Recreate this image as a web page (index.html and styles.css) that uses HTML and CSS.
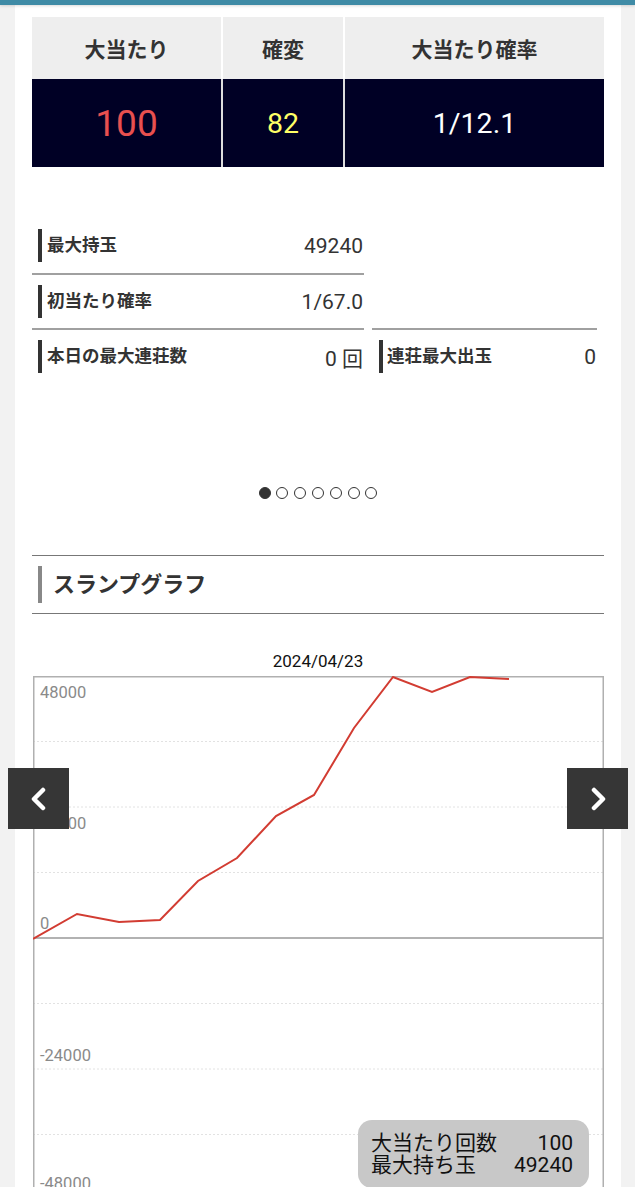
FILE: index.html
```html
<!DOCTYPE html>
<html>
<head>
    <meta charset="utf-8">
    <title>台データ</title>
    <link rel="stylesheet" href="styles.css">
</head>
<body>
    <div class="topbar"></div>
    <div class="panel">
        <p class="top-note">データ更新 2024/04/23</p>

        <table class="summary">
            <colgroup>
                <col class="col-a">
                <col class="col-b">
                <col class="col-c">
            </colgroup>
            <tr>
                <th>大当たり</th>
                <th>確変</th>
                <th>大当たり確率</th>
            </tr>
            <tr>
                <td class="num-red">100</td>
                <td class="num-yellow">82</td>
                <td class="num-white">1/12.1</td>
            </tr>
        </table>

        <div class="stats">
            <div class="stat left">
                <span class="stat-label">最大持玉</span>
                <span class="stat-value">49240</span>
            </div>
            <div class="stat left line">
                <span class="stat-label">初当たり確率</span>
                <span class="stat-value">1/67.0</span>
            </div>
            <div class="stat left line">
                <span class="stat-label">本日の最大連荘数</span>
                <span class="stat-value">0 回</span>
            </div>
            <div class="stat line right">
                <span class="stat-label">連荘最大出玉</span>
                <span class="stat-value">0</span>
            </div>
        </div>

        <div class="dots">
            <span class="dot active"></span>
            <span class="dot"></span>
            <span class="dot"></span>
            <span class="dot"></span>
            <span class="dot"></span>
            <span class="dot"></span>
            <span class="dot"></span>
        </div>

        <h3 class="section-title"><span>スランプグラフ</span></h3>

        <div class="chart-date">2024/04/23</div>
        <div class="chart">
            <svg width="571" height="540" viewBox="0 0 571 540">
                <g stroke="#e2e2e2" stroke-width="1" stroke-dasharray="2 2">
                    <line x1="0" y1="65.5" x2="571" y2="65.5"/>
                    <line x1="0" y1="131" x2="571" y2="131"/>
                    <line x1="0" y1="196.5" x2="571" y2="196.5"/>
                    <line x1="0" y1="327.5" x2="571" y2="327.5"/>
                    <line x1="0" y1="393" x2="571" y2="393"/>
                    <line x1="0" y1="458.5" x2="571" y2="458.5"/>
                    <line x1="0" y1="524" x2="571" y2="524"/>
                </g>
                <line x1="0" y1="262" x2="571" y2="262" stroke="#999" stroke-width="1.5"/>
                <g stroke="#b0b0b0" stroke-width="1.5" fill="none">
                    <line x1="0" y1="0.75" x2="571" y2="0.75"/>
                    <line x1="0.75" y1="0" x2="0.75" y2="540"/>
                    <line x1="570.25" y1="0" x2="570.25" y2="540"/>
                </g>
                <g class="axis">
                    <text x="7" y="22">48000</text>
                    <text x="7" y="153">24000</text>
                    <text x="7" y="253">0</text>
                    <text x="7" y="385">-24000</text>
                    <text x="7" y="513">-48000</text>
                </g>
                <polyline fill="none" stroke="#d23c32" stroke-width="2"
                    points="0,263 44,238 86,246 127,244 165,205 204,182 243,140 281,119 321,52 360,1 399,16 437,1 476,3"/>
            </svg>

            <button class="nav prev">
                <svg width="16" height="24" viewBox="0 0 16 24"><polyline points="12,3 3,12 12,21" fill="none" stroke="#fff" stroke-width="4.5" stroke-linecap="round" stroke-linejoin="round"/></svg>
            </button>
            <button class="nav next">
                <svg width="16" height="24" viewBox="0 0 16 24"><polyline points="4,3 13,12 4,21" fill="none" stroke="#fff" stroke-width="4.5" stroke-linecap="round" stroke-linejoin="round"/></svg>
            </button>

            <div class="tip">
                <div class="tip-row"><span>大当たり回数</span><span>100</span></div>
                <div class="tip-row"><span>最大持ち玉</span><span>49240</span></div>
            </div>
        </div>
    </div>
</body>
</html>
```

FILE: styles.css
```css
body {
    margin: 0;
    background-color: #f2f2f2;
    font-family: Roboto, "Noto Sans CJK JP", sans-serif;
    color: #333;
    overflow: hidden;
}
.topbar {
    position: fixed;
    top: 0;
    left: 0;
    right: 0;
    height: 5px;
    background-color: #3f8ba6;
    box-shadow: 0 1px 3px rgba(0, 0, 0, 0.15);
    z-index: 5;
}
.panel {
    background-color: #fff;
    margin: 0 14px 0 15px;
    padding: 0 17px 60px;
    height: 1300px;
}
.top-note {
    margin: -10px 0 0 6px;
    font-size: 14px;
    line-height: 17px;
    color: #777;
}
.summary {
    width: 100%;
    margin-top: 10px;
    border-collapse: collapse;
    table-layout: fixed;
}
.col-a { width: 190px; }
.col-b { width: 122px; }
.summary th {
    height: 62px;
    background-color: #eeeeee;
    font-size: 21px;
    font-weight: bold;
    color: #333;
    border-left: 2px solid #fff;
    padding: 0;
}
.summary td {
    height: 88px;
    background-color: #000025;
    text-align: center;
    font-size: 28.5px;
    border-left: 2px solid #ddd;
    padding: 0;
}
.summary th:first-child, .summary td:first-child {
    border-left: none;
}
.num-red {
    color: #e8504f;
    font-size: 37px !important;
}
.num-yellow {
    color: #ffff66;
}
.num-white {
    color: #fff;
}
.stats {
    display: grid;
    grid-template-columns: 332px 225px;
    grid-auto-rows: 55px;
    column-gap: 8px;
    margin-top: 51px;
}
.stat {
    display: flex;
    align-items: center;
    justify-content: space-between;
    box-sizing: border-box;
}
.stat.left {
    grid-column: 1;
}
.stat.line {
    border-top: 2px solid #a0a0a0;
}
.stat.right {
    grid-column: 2;
    grid-row: 3;
}
.stat-label {
    margin-left: 6px;
    padding-left: 5px;
    border-left: 4px solid #333;
    font-size: 17.5px;
    font-weight: bold;
    line-height: 33px;
}
.stat.right .stat-label {
    margin-left: 7px;
    padding-left: 4px;
}
.stat-value {
    font-size: 21px;
    margin-right: 1px;
}
.dots {
    display: flex;
    justify-content: center;
    gap: 5.8px;
    margin-top: 104px;
    height: 12px;
}
.dot {
    width: 12px;
    height: 12px;
    box-sizing: border-box;
    border: 1.5px solid #333;
    border-radius: 50%;
}
.dot.active {
    background-color: #333;
}
.section-title {
    margin: 56px 0 0;
    height: 57px;
    border-top: 1px solid #777;
    border-bottom: 1px solid #777;
    display: flex;
    align-items: center;
}
.section-title span {
    margin-left: 6px;
    padding-left: 11px;
    border-left: 4px solid #888;
    line-height: 37px;
    font-size: 22px;
    font-weight: bold;
    color: #333;
}
.chart-date {
    margin-top: 37px;
    text-align: center;
    font-size: 17px;
    line-height: 20px;
    color: #111;
}
.chart {
    position: relative;
    width: 571px;
    margin: 5px 0 0 1px;
}
.chart svg {
    display: block;
}
.axis text {
    font-family: Roboto, sans-serif;
    font-size: 16.5px;
    fill: #8a8a8a;
}
.nav {
    position: absolute;
    top: 92px;
    width: 61px;
    height: 61px;
    border: none;
    padding: 0;
    background-color: #363636;
    display: flex;
    align-items: center;
    justify-content: center;
}
.nav.prev {
    left: -25px;
}
.nav.next {
    right: -24px;
}
.tip {
    position: absolute;
    left: 325px;
    top: 444px;
    width: 231px;
    box-sizing: border-box;
    padding: 12px 16px 12px 13px;
    background-color: #c8c8c8;
    border-radius: 14px;
    font-size: 21px;
    line-height: 22px;
    color: #111;
}
.tip-row {
    display: flex;
    justify-content: space-between;
}
```
